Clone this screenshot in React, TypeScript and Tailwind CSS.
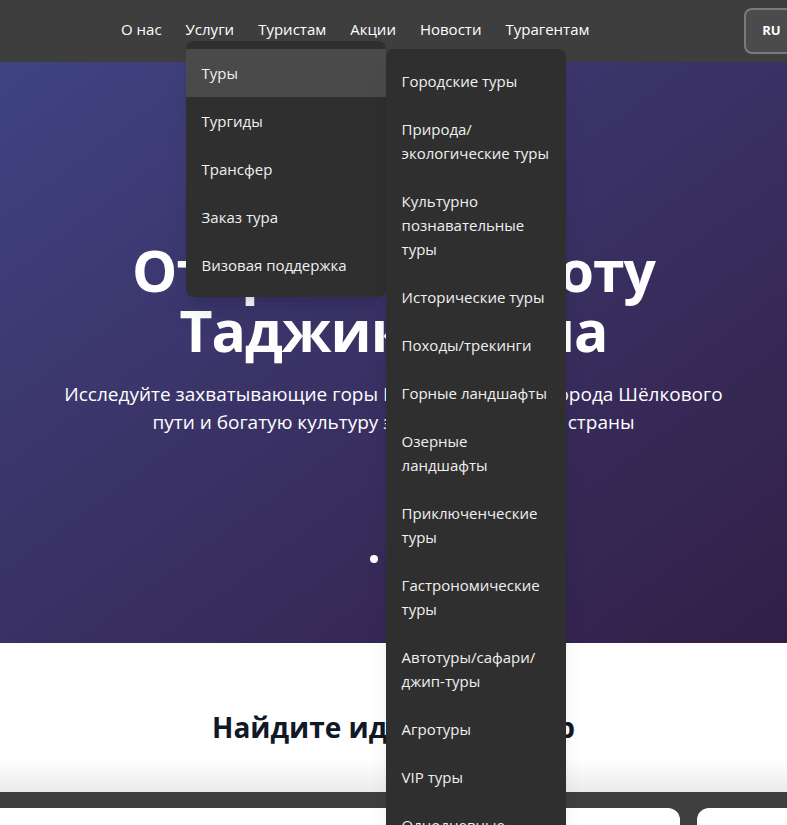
import React from "react";

const navItems = ["О нас", "Услуги", "Туристам", "Акции", "Новости", "Турагентам"];

const services = ["Туры", "Тургиды", "Трансфер", "Заказ тура", "Визовая поддержка"];

const tourTypes: string[][] = [
  ["Городские туры"],
  ["Природа/", "экологические туры"],
  ["Культурно", "познавательные", "туры"],
  ["Исторические туры"],
  ["Походы/трекинги"],
  ["Горные ландшафты"],
  ["Озерные", "ландшафты"],
  ["Приключенческие", "туры"],
  ["Гастрономические", "туры"],
  ["Автотуры/сафари/", "джип-туры"],
  ["Агротуры"],
  ["VIP туры"],
  ["Однодневные", "туры"],
  ["Многодневные", "туры"],
];

export default function App() {
  return (
    <div
      className="relative h-[825px] overflow-hidden bg-white"
      style={{ fontFamily: '"Open Sans", "Noto Sans", sans-serif' }}
    >
      <header className="relative z-20 flex h-[62px] items-center bg-[#3e3e3e] pl-[121px]">
        <nav className="flex gap-6">
          {navItems.map((item) => (
            <div key={item} className="relative flex h-[62px] items-center pb-1">
              <span className="text-[15px] text-white">{item}</span>
              {item === "Услуги" && <ServicesMenu />}
            </div>
          ))}
        </nav>
        <button className="ml-auto -mr-3 flex h-[46px] w-[55px] items-center justify-center rounded-lg border-2 border-[#7a7a7a] bg-[#4b4b4b] text-[13px] font-bold text-white">
          RU
        </button>
      </header>

      <section className="flex h-[581px] flex-col items-center bg-gradient-to-br from-[#3f4382] to-[#321f47] pt-[178px] text-center text-white">
        <h1 className="text-[57px] font-bold leading-[60px] tracking-[-1px]">
          Откройте красоту
          <br />
          Таджикистана
        </h1>
        <p className="mt-5 text-[19px] leading-7">
          Исследуйте захватывающие горы Памира, древние города Шёлкового
          <br />
          пути и богатую культуру этой удивительной страны
        </p>
        <div className="mt-[119px] flex gap-3">
          <span className="h-2 w-2 rounded-full bg-white" />
          <span className="h-2 w-2 rounded-full bg-white/50" />
          <span className="h-2 w-2 rounded-full bg-white/50" />
        </div>
      </section>

      <section className="h-[149px] bg-gradient-to-b from-white from-[78%] to-[#ebebeb] pt-[66px] text-center">
        <h2 className="text-[28px] font-bold leading-9 text-[#111827]">Найдите идеальный тур</h2>
      </section>

      <section className="h-[60px] bg-[#3f3f3f] pt-4">
        <div className="-ml-5 flex gap-[17px]">
          <div className="h-20 w-[700px] shrink-0 rounded-xl bg-white" />
          <div className="h-20 w-[200px] shrink-0 rounded-xl bg-white" />
        </div>
      </section>
    </div>
  );
}

function ServicesMenu() {
  return (
    <div className="absolute left-0 top-[41px] w-[200px] rounded-lg bg-[#2f2f2f] py-2 shadow-xl">
      {services.map((s, i) => (
        <div
          key={s}
          className={`relative flex h-12 items-center px-4 text-[15px] text-[#f0f0f0] ${
            i === 0 ? "bg-[#4a4a4a]" : ""
          }`}
        >
          {s}
          {i === 0 && <ToursMenu />}
        </div>
      ))}
    </div>
  );
}

function ToursMenu() {
  return (
    <div className="absolute left-full top-0 w-[180px] rounded-lg bg-[#2f2f2f] py-2 shadow-xl">
      {tourTypes.map((lines) => (
        <div key={lines.join(" ")} className="px-4 py-3 text-[15px] leading-6 text-[#f0f0f0]">
          {lines.map((l) => (
            <div key={l} className="whitespace-nowrap">
              {l}
            </div>
          ))}
        </div>
      ))}
    </div>
  );
}
